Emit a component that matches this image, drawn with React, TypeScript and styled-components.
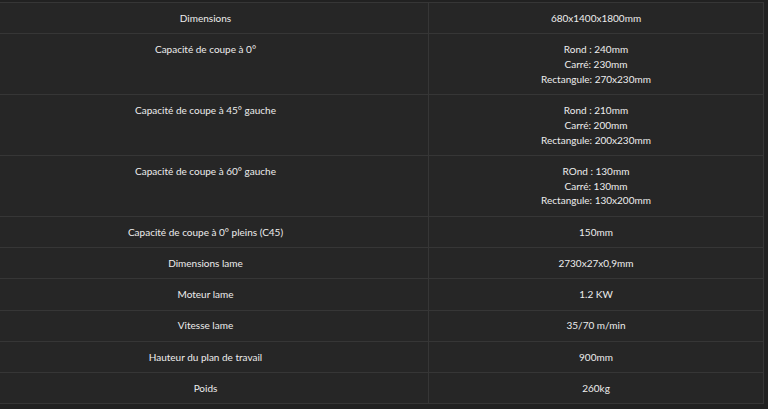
import React from 'react';
import styled, { createGlobalStyle } from 'styled-components';

const GlobalStyle = createGlobalStyle`
  body {
    margin: 0;
    background: #212121;
    font-family: Lato, "Open Sans", sans-serif;
    overflow: hidden;
  }
`;

const Page = styled.div`
  padding-top: 2px;
  margin-left: -18px;
  width: 782px;
`;

const Table = styled.table`
  width: 100%;
  table-layout: fixed;
  border-collapse: collapse;
  background: #262626;
  font-size: 10px;
  line-height: 14.85px;
  color: #ededed;
`;

const LabelCol = styled.col`
  width: 446px;
`;

const Cell = styled.td`
  border: 1px solid #363636;
  padding: 7.7px 8px;
  text-align: center;
  vertical-align: top;
`;

interface Spec {
  label: string;
  values: string[];
}

const specs: Spec[] = [
  { label: 'Dimensions', values: ['680x1400x1800mm'] },
  {
    label: 'Capacité de coupe à 0°',
    values: ['Rond : 240mm', 'Carré: 230mm', 'Rectangule: 270x230mm'],
  },
  {
    label: 'Capacité de coupe à 45° gauche',
    values: ['Rond : 210mm', 'Carré: 200mm', 'Rectangule: 200x230mm'],
  },
  {
    label: 'Capacité de coupe à 60° gauche',
    values: ['ROnd : 130mm', 'Carré: 130mm', 'Rectangule: 130x200mm'],
  },
  { label: 'Capacité de coupe à 0° pleins (C45)', values: ['150mm'] },
  { label: 'Dimensions lame', values: ['2730x27x0,9mm'] },
  { label: 'Moteur lame', values: ['1.2 KW'] },
  { label: 'Vitesse lame', values: ['35/70 m/min'] },
  { label: 'Hauteur du plan de travail', values: ['900mm'] },
  { label: 'Poids', values: ['260kg'] },
];

const App = () => (
  <>
    <GlobalStyle />
    <Page>
      <Table>
        <colgroup>
          <LabelCol />
          <col />
        </colgroup>
        <tbody>
          {specs.map(spec => (
            <tr key={spec.label}>
              <Cell>{spec.label}</Cell>
              <Cell>
                {spec.values.map((v, i) => (
                  <React.Fragment key={v}>
                    {i > 0 && <br />}
                    {v}
                  </React.Fragment>
                ))}
              </Cell>
            </tr>
          ))}
        </tbody>
      </Table>
    </Page>
  </>
);

export default App;
